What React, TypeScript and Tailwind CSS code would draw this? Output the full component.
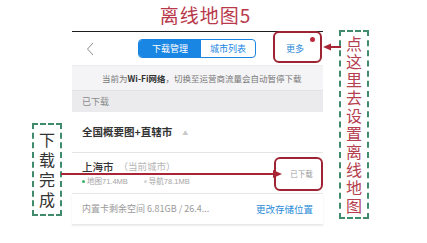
import React from 'react';

const cjk = { fontFamily: '"Noto Sans CJK SC", "Noto Sans", sans-serif' };

const App: React.FC = () => {
    return (
        <div className="relative w-[427px] h-[243px] overflow-hidden bg-white flex" style={cjk}>
            {/* left note */}
            <div className="w-[72px] pt-[123px] pl-[32px]">
                <div className="w-[30px] h-[93px] flex items-center justify-center border-2 border-dashed border-[#3f8b6b]">
                    <span className="[writing-mode:vertical-rl] text-[16px] leading-[16px] tracking-[4px] text-[#333] pt-[4px]">下载完成</span>
                </div>
            </div>

            {/* phone screen */}
            <div className="w-[251px] flex flex-col">
                <div className="h-[31px] flex items-center justify-center pl-[16px] text-[19px] text-[#b9394c] tracking-[1px]">
                    离线地图5
                </div>
                <div className="border-t border-[#1e1e1e] flex flex-col">
                    <div className="h-[33px] bg-white flex items-center pl-[14px]">
                        <svg width="8" height="14" viewBox="0 0 8 14" fill="none">
                            <path d="M7 1 L1.5 7 L7 13" stroke="#8e8e93" strokeWidth="1" />
                        </svg>
                        <div className="ml-[44px] flex h-[19px] w-[118px] rounded-[4px] border border-[#1a86e4] overflow-hidden text-[9px]">
                            <div className="w-[62px] bg-[#1a86e4] text-white flex items-center justify-center">下载管理</div>
                            <div className="flex-1 text-[#1a86e4] flex items-center justify-center">城市列表</div>
                        </div>
                        <div className="ml-[30px] relative text-[9px] text-[#2a8ad8]">
                            更多
                            <span className="absolute left-[24px] top-[-5px] w-[5px] h-[5px] rounded-full bg-[#c0283c]"></span>
                        </div>
                    </div>
                    <div className="h-[25px] bg-[#f4f4f6] flex items-center pl-[30px] text-[8.5px] text-[#777] border-t border-[#ececec]">
                        当前为<b className="text-[#333] font-bold">Wi-Fi网络</b>，切换至运营商流量会自动暂停下载
                    </div>
                    <div className="h-[22px] bg-[#ebebee] flex items-center pl-[10px] text-[9px] text-[#8a8a8a] border-t border-[#e2e2e4]">
                        已下载
                    </div>
                    <div className="h-[41px] bg-white flex items-center pl-[10px] border-b border-[#e4e4e4]">
                        <span className="text-[10.5px] font-bold text-[#333]">全国概要图+直辖市</span>
                        <span className="ml-[10px] text-[6px] text-[#c8c8c8]">▲</span>
                    </div>
                    <div className="h-[40px] bg-white flex flex-col justify-center pl-[10px] gap-[2px]">
                        <div className="flex items-center">
                            <span className="text-[10.5px] font-medium text-[#333]">上海市</span>
                            <span className="ml-[5px] text-[9.5px] text-[#b5b5b5]">（当前城市）</span>
                        </div>
                        <div className="flex items-center text-[7.5px] text-[#a5a5a5]" style={{ fontFamily: '"Liberation Sans", "Noto Sans CJK SC", sans-serif' }}>
                            <span className="w-[3px] h-[3px] rounded-full bg-[#3bb36a] mr-[2px]"></span>
                            地图71.4MB
                            <span className="ml-[16px] w-[3px] h-[3px] rounded-full bg-[#d5d5d5] mr-[2px]"></span>
                            导航78.1MB
                        </div>
                    </div>
                    <div className="h-[32px] bg-white flex items-center justify-between pl-[10px] pr-[10px] border-t border-[#e8e8e8] border-b shadow-[0_1px_2px_rgba(0,0,0,0.08)]">
                        <span className="text-[9px] text-[#9a9a9a]">内置卡剩余空间 6.81GB / 26.4...</span>
                        <span className="text-[9.5px] text-[#2a8ad8]">更改存储位置</span>
                    </div>
                </div>
            </div>

            {/* right note */}
            <div className="pl-[16px] pt-[30px]">
                <div className="w-[30px] h-[189px] flex items-center justify-center border-2 border-dashed border-[#3f8b6b]">
                    <span className="[writing-mode:vertical-rl] text-[16px] leading-[16px] tracking-[2px] text-[#b5404f] pt-[2px]">点这里去设置离线地图</span>
                </div>
            </div>

            {/* annotations */}
            <div className="absolute left-[273px] top-[31px] w-[49px] h-[32px] rounded-[6px] border-2 border-[#9e2433]"></div>
            <div className="absolute left-[274px] top-[157px] w-[49px] h-[34px] rounded-[6px] border-2 border-[#9e2433] flex items-center justify-center">
                <span className="pl-[6px] text-[7.5px] text-[#9a9a9a]">已下载</span>
            </div>
            <svg className="absolute left-0 top-0" width="427" height="243">
                <line x1="330" y1="47" x2="341" y2="47" stroke="#a82535" strokeWidth="2" />
                <polygon points="323,47 331,43.5 331,50.5" fill="#a82535" />
                <line x1="61" y1="174" x2="274" y2="174" stroke="#a82535" strokeWidth="2" />
                <polygon points="282,174 273,170 273,178" fill="#a82535" />
            </svg>
        </div>
    );
};

export default App;
